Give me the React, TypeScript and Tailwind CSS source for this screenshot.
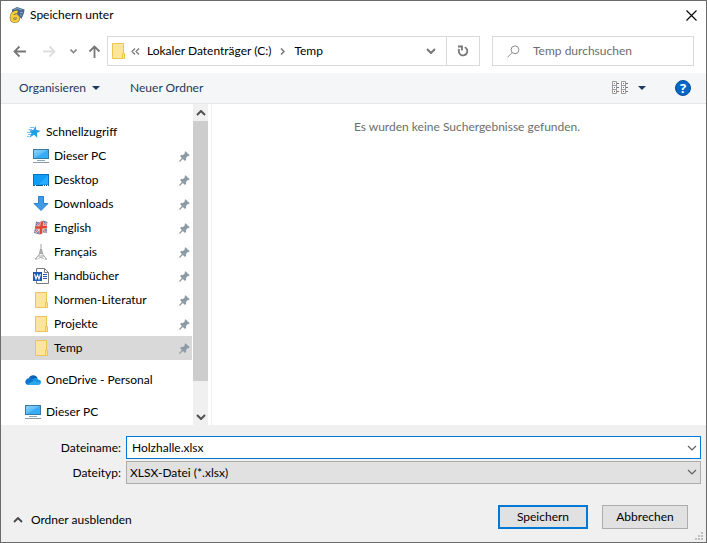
import { useState } from 'react';
import type { ReactNode } from 'react';

type Entry = {
  label: string;
  icon: ReactNode;
  selected?: boolean;
};

/* Icons */

function AppIcon() {
  return (
    <svg width="16" height="16" viewBox="0 0 16 16">
      <path d="M3 2.500 L8 0 L15.500 2.500 L15 6 L12.500 12 L8 7 L3 5 Z" fill="#47698f" />
      <path d="M5 2.500 L8.500 1.500 L13 3 M11 5.500 L14 5.500 M11 8 L13 8" stroke="#86a3c6" fill="none" />
      <path
        d="M8.500 5 C4.500 4.500 2.800 7 2.500 10.500 C2.500 13 4 14 5.800 14 C8 14 9.200 12.800 9.200 11.300 C9.200 9.700 8 9 6.500 9 C5 9 4 9.500 3 10.500"
        fill="none"
        stroke="#7d7040"
        strokeWidth="3.600"
      />
      <path
        d="M8.500 5 C4.500 4.500 2.800 7 2.500 10.500 C2.500 13 4 14 5.800 14 C8 14 9.200 12.800 9.200 11.300 C9.200 9.700 8 9 6.500 9 C5 9 4 9.500 3 10.500"
        fill="none"
        stroke="#f9cf36"
        strokeWidth="2.400"
      />
      <path d="M5.500 11 H6.500 V12.500 H5.500 Z" fill="#5c5230" />
    </svg>
  );
}

function FolderIcon() {
  return (
    <svg width="16" height="16" viewBox="0 0 16 16">
      <path d="M2.500 0.500 H13.500 V15.500 H2.500 Z" fill="#ffe59a" stroke="#eac54f" />
      <path d="M12.500 10.500 H14.500 V15.500 H12.500 Z" fill="#ffe79f" stroke="#eac54f" />
    </svg>
  );
}

function ComputerIcon() {
  return (
    <svg width="16" height="16" viewBox="0 0 16 16">
      <defs>
        <linearGradient id="screen" x1="0" y1="0" x2="1" y2="1">
          <stop offset="0" stopColor="#8fd4fb" />
          <stop offset="0.500" stopColor="#5cbdf8" />
          <stop offset="0.520" stopColor="#3aacf3" />
          <stop offset="1" stopColor="#29b0f8" />
        </linearGradient>
      </defs>
      <rect x="0.500" y="1.500" width="15" height="9" fill="url(#screen)" stroke="#39789f" />
      <rect x="4" y="12" width="8" height="1" fill="#8fa9bb" />
      <rect x="0" y="14" width="16" height="1" fill="#8a9ba8" />
    </svg>
  );
}

function DesktopIcon() {
  return (
    <svg width="16" height="16" viewBox="0 0 16 16">
      <rect x="0.500" y="2.500" width="15" height="11" fill="#0e9cf9" stroke="#0872bd" />
      <path d="M15 3 V12 H6 Z" fill="#29abff" />
      <path d="M1 13.500 H15" stroke="#07578f" />
      <path d="M2 13.500 H3 M10 13.500 H11 M12 13.500 H13 M14 13.500 H15" stroke="#fff" />
    </svg>
  );
}

function DownloadIcon() {
  return (
    <svg width="16" height="16" viewBox="0 0 16 16">
      <path d="M5.500 0.500 H10.500 V7.500 H15 L8 14.500 L1 7.500 H5.500 Z" fill="#3f9ae8" stroke="#2b80cc" />
    </svg>
  );
}

function StarIcon() {
  return (
    <svg width="16" height="16" viewBox="0 0 16 16">
      <path
        d="M10.500 2 L11.300 6 L15.700 6.700 L12 9 L12.300 13.700 L9 10.800 L4.500 13.700 L6.500 9.300 L4.500 6.500 L8.300 6 Z"
        fill="#1f9fe8"
      />
      <path d="M5 3.500 H9 M3.500 5.500 H7 M2 8.500 H6 M3 10.500 H6 M2 12.500 H4.500" stroke="#77c3ef" />
    </svg>
  );
}

function EnglishIcon() {
  return (
    <svg width="16" height="16" viewBox="0 0 16 16">
      <path d="M3 1.500 L7 2.500 L10 0.500 L14.500 2 L13.500 7 L14 13 L10 12.500 L7 14.500 L1 13 L2 8 Z" fill="#6179b0" />
      <path d="M4 3 L13 12.500 M13.500 3 L2.500 12.500" stroke="#e9d5dc" strokeWidth="1.800" />
      <path d="M9 1.500 L7.500 14 M2 7.500 L14 7" stroke="#f1c9c4" strokeWidth="4" />
      <path d="M9 1.500 L7.500 14 M2 7.500 L14 7" stroke="#df4632" strokeWidth="2.400" />
      <path d="M4 3 L6.500 5.500 M13.500 3 L11 5 M2.500 12.500 L5 10 M13 12.500 L10.500 10" stroke="#d8665e" />
    </svg>
  );
}

function TowerIcon() {
  return (
    <svg width="16" height="16" viewBox="0 0 16 16" fill="none" stroke="#a3a3a3">
      <path d="M8 0 V6" />
      <path d="M7.500 5 L6.500 10 L2.500 15 M8.500 5 L9.500 10 L13.500 15" />
      <path d="M6 9.500 H10 M5 12 H11 M7 6 L9 9 M9 6 L7 9" />
      <path d="M5.500 15 C6 13 10 13 10.500 15 M2 15 H4.500 M11.500 15 H14" />
    </svg>
  );
}

function WordIcon() {
  return (
    <svg width="16" height="16" viewBox="0 0 16 16">
      <path d="M3.500 0.500 H11.500 L15.500 4.500 V15.500 H3.500 Z" fill="#fff" stroke="#7a7a7a" />
      <path d="M11.500 0.500 V4.500 H15.500" fill="none" stroke="#7a7a7a" />
      <path d="M10 6.500 H14 M10 8.500 H14 M10 10.500 H14" stroke="#2b5fb4" />
      <rect x="0" y="4" width="9" height="9" fill="#2058b2" />
      <path d="M1.500 6 L3 11 L4.500 7 L6 11 L7.500 6" fill="none" stroke="#fff" strokeWidth="1.100" />
    </svg>
  );
}

function CloudIcon() {
  return (
    <svg width="16" height="16" viewBox="0 0 16 16">
      <path d="M4 6 C5 2.500 11 2 12.500 6 L11 9 L5 8 Z" fill="#0a5fb4" />
      <path d="M3.500 13 C-1 13 -0.500 7 3.500 6.300 C5 5.500 7 6 8 7 L11 10 L6 13 Z" fill="#0c75d0" />
      <path d="M7 8 C9 5.500 12 5.500 13 7.500 C16 7.500 16.500 10 15.500 11.500 L10 10 Z" fill="#1793e4" />
      <path d="M2 12.500 L9 8.800 L15.700 11.300 C15.300 12.500 14.500 13 13.500 13 H3.500 C3 13 2.500 12.800 2 12.500 Z" fill="#2aa8ee" />
    </svg>
  );
}

function PinIcon() {
  return (
    <svg width="11" height="11" viewBox="0 0 11 11" fill="#8c9ba5">
      <path d="M6.500 0.300 L10.700 4.300 L9.500 5.300 L8.800 5.100 L7 7 L7.200 8.800 L6 10 L3.900 8.100 L0.900 10.900 L0 10.200 L2.900 7 L1 5 L2.200 3.900 L4 4 L5.900 2.200 L5.600 1.200 Z" />
    </svg>
  );
}

function Chevron({ className = '', color = '#5f5f5f', width = 1 }: { className?: string; color?: string; width?: number }) {
  return (
    <svg className={className} width="10" height="6" viewBox="0 0 10 6" fill="none">
      <path d="M1 1 L5 5 L9 1" stroke={color} strokeWidth={width} />
    </svg>
  );
}

function Arrow({ className = '', color = '#777' }: { className?: string; color?: string }) {
  return (
    <svg className={className} width="13" height="13" viewBox="0 0 13 13" fill="none" stroke={color} strokeWidth="1.800">
      <path d="M1.500 6.500 H13 M6.500 1.500 L1.500 6.500 L6.500 11.500" />
    </svg>
  );
}

function ViewIcon() {
  return (
    <svg width="17" height="14" viewBox="0 0 17 14" fill="none">
      <path d="M0.500 0.500 H4.500 V12.500 H0.500 Z M9.500 0.500 H13.500 V12.500 H9.500 Z" fill="#fff" stroke="#999" />
      <path d="M0.500 4.500 H4.500 M0.500 8.500 H4.500 M9.500 4.500 H13.500 M9.500 8.500 H13.500" stroke="#999" />
      <path d="M5 2.500 H7 M5 6.500 H7 M5 10.500 H7 M14 2.500 H16 M14 6.500 H16 M14 10.500 H16" stroke="#777" />
      <path d="M2 2.500 H3 M11 2.500 H12" stroke="#777" />
      <path d="M2 6.500 H3 M11 6.500 H12" stroke="#5577cc" />
      <path d="M2 10.500 H3 M11 10.500 H12" stroke="#c33" />
    </svg>
  );
}

const quickAccess: Entry[] = [
  { label: 'Dieser PC', icon: <ComputerIcon /> },
  { label: 'Desktop', icon: <DesktopIcon /> },
  { label: 'Downloads', icon: <DownloadIcon /> },
  { label: 'English', icon: <EnglishIcon /> },
  { label: 'Français', icon: <TowerIcon /> },
  { label: 'Handbücher', icon: <WordIcon /> },
  { label: 'Normen-Literatur', icon: <FolderIcon /> },
  { label: 'Projekte', icon: <FolderIcon /> },
  { label: 'Temp', icon: <FolderIcon />, selected: true },
];

function TreeRoot({ label, icon }: Entry) {
  return (
    <button className="flex h-6 w-full items-center gap-[5px] pl-6 text-left">
      {icon}
      <span>{label}</span>
    </button>
  );
}

function Sidebar() {
  return (
    <nav className="flex w-[207px] shrink-0">
      <div className="min-w-0 flex-1 space-y-2 pt-4 pb-px">
        <div>
          <TreeRoot label="Schnellzugriff" icon={<StarIcon />} />
          <ul className="mr-px">
            {quickAccess.map((entry) => (
              <li key={entry.label}>
                <button
                  className={`flex h-6 w-full items-center gap-[5px] pr-[2px] pl-8 text-left ${entry.selected ? 'bg-[#d9d9d9]' : ''}`}
                >
                  {entry.icon}
                  <span className="flex-1">{entry.label}</span>
                  <PinIcon />
                </button>
              </li>
            ))}
          </ul>
        </div>
        <TreeRoot label="OneDrive - Personal" icon={<CloudIcon />} />
        <TreeRoot label="Dieser PC" icon={<ComputerIcon />} />
      </div>

      {/* Bildlaufleiste */}
      <div className="flex w-[15px] flex-col bg-[#f0f0f0]">
        <button aria-label="Nach oben" className="flex h-[17px] items-center justify-center">
          <Chevron className="rotate-180" color="#505050" width={2} />
        </button>
        <div className="h-[260px] bg-[#cdcdcd]" />
        <button aria-label="Nach unten" className="mt-auto flex h-[17px] items-center justify-center">
          <Chevron color="#505050" width={2} />
        </button>
      </div>
    </nav>
  );
}

export default function App() {
  const [fileName, setFileName] = useState('Holzhalle.xlsx');

  return (
    <div className="flex min-h-screen flex-col border border-[#6b6b6b] bg-white font-['Lato','Open_Sans',sans-serif] text-[12px] leading-4 text-black">
      {/* Titelleiste */}
      <header className="flex h-[35px] items-start pt-[6px] pr-[9px] pl-2">
        <AppIcon />
        <h1 className="ml-[5px] flex-1">Speichern unter</h1>
        <button aria-label="Schließen" className="pt-[3px]">
          <svg width="11" height="11" viewBox="0 0 11 11" stroke="#000" strokeWidth="1.100">
            <path d="M0.500 0.500 L10.500 10.500 M10.500 0.500 L0.500 10.500" />
          </svg>
        </button>
      </header>

      {/* Navigation */}
      <div className="flex h-[30px] items-center pr-3 pl-3">
        <div className="flex w-[94px] items-center">
          <button aria-label="Zurück"><Arrow /></button>
          <button aria-label="Vorwärts" className="ml-[17px]"><Arrow className="rotate-180" color="#ddd" /></button>
          <button aria-label="Zuletzt besucht" className="ml-[14px]">
            <svg width="7" height="5" viewBox="0 0 7 5" fill="none" stroke="#888" strokeWidth="1.600">
              <path d="M0.500 0.500 L3.500 3.500 L6.500 0.500" />
            </svg>
          </button>
          <button aria-label="Nach oben" className="ml-[11px]"><Arrow className="rotate-90" /></button>
        </div>
        <div className="flex h-[30px] flex-1 items-center border border-[#d9d9d9]">
          <span className="ml-[2px]"><FolderIcon /></span>
          <svg className="ml-[5px]" width="9" height="7" viewBox="0 0 9 7" fill="none" stroke="#777" strokeWidth="1.200">
            <path d="M4 0.500 L1 3.500 L4 6.500 M8 0.500 L5 3.500 L8 6.500" />
          </svg>
          <button className="ml-[7px]">Lokaler Datenträger (C:)</button>
          <svg className="ml-[9px]" width="5" height="7" viewBox="0 0 5 7" fill="none" stroke="#777" strokeWidth="1.500">
            <path d="M1 0.500 L4 3.500 L1 6.500" />
          </svg>
          <button className="ml-[9px]">Temp</button>
          <button aria-label="Verlauf" className="mr-[10px] ml-auto">
            <Chevron color="#777" width={2} />
          </button>
          <button aria-label="Aktualisieren" className="flex h-full w-[33px] items-center justify-center border-l border-[#d9d9d9]">
            <svg width="12" height="12" viewBox="0 0 12 12" fill="none" stroke="#777" strokeWidth="1.800">
              <path d="M7.800 2.200 A4.300 4.300 0 1 1 2.300 4" />
              <path d="M1 1.500 H5 V5.500" />
            </svg>
          </button>
        </div>
        <label className="ml-3 flex h-[30px] w-[202px] items-center border border-[#d9d9d9] pl-[14px]">
          <svg className="shrink-0" width="13" height="13" viewBox="0 0 13 13" fill="none" stroke="#8c8c8c">
            <circle cx="8" cy="4.800" r="3.900" />
            <path d="M5.200 7.600 L0.500 12.300" />
          </svg>
          <input
            type="search"
            aria-label="Temp durchsuchen"
            placeholder="Temp durchsuchen"
            className="ml-[13px] w-full min-w-0 outline-none placeholder:text-[#6d6d6d]"
          />
        </label>
      </div>

      {/* Werkzeugleiste */}
      <div className="mt-[7px] flex h-[31px] items-center border-b border-[#e6e7e8] bg-[#f5f6f7] pr-[15px] pl-[18px] text-[#1e395b]">
        <button className="flex items-center gap-[6px]">
          Organisieren
          <svg width="8" height="4" viewBox="0 0 8 4" fill="#1e395b"><path d="M0 0 H8 L4 4 Z" /></svg>
        </button>
        <button className="ml-[30px]">Neuer Ordner</button>
        <button aria-label="Ansicht ändern" className="ml-auto flex items-center gap-[9px]">
          <ViewIcon />
          <svg width="8" height="4" viewBox="0 0 8 4" fill="#1e395b"><path d="M0 0 H8 L4 4 Z" /></svg>
        </button>
        <button
          aria-label="Hilfe"
          className="ml-[29px] flex size-4 items-center justify-center rounded-full border border-[#0b4f93] bg-[#0067c9] font-['Open_Sans',sans-serif] text-[13px] font-bold text-white"
        >
          ?
        </button>
      </div>

      <div className="flex flex-1">
        <Sidebar />
        <main className="ml-[3px] flex-1 border-l border-[#f0f0f0] pt-[15px] pl-4 text-center text-[#6d6d6d]">
          <p>Es wurden keine Suchergebnisse gefunden.</p>
        </main>
      </div>

      <form className="relative bg-[#f0f0f0] pt-[11px] pr-[5px] pb-[13px]" onSubmit={(e) => e.preventDefault()}>
        <div className="grid grid-cols-[120px_1fr] items-center gap-x-[5px] gap-y-[2px]">
          <label htmlFor="filename" className="text-right">Dateiname:</label>
          <div className="flex h-[23px] items-center border border-[#0078d7] bg-white pr-[3px]">
            <input
              id="filename"
              className="min-w-0 flex-1 pl-[5px] outline-none"
              value={fileName}
              onChange={(e) => setFileName(e.target.value)}
            />
            <button type="button" aria-label="Vorherige Namen"><Chevron width={1.2} /></button>
          </div>
          <label htmlFor="filetype" className="text-right">Dateityp:</label>
          <div className="relative">
            <select id="filetype" className="block h-[23px] w-full appearance-none border border-[#adadad] bg-[#e1e1e1] pl-[3px]">
              <option>XLSX-Datei (*.xlsx)</option>
            </select>
            <Chevron className="pointer-events-none absolute top-2 right-1" width={1.2} />
          </div>
        </div>

        <div className="mt-[21px] flex items-start pr-[13px]">
          <button type="button" className="mt-[7px] ml-3 flex items-center gap-2">
            <Chevron className="rotate-180" color="#444" width={1.8} />
            Ordner ausblenden
          </button>
          <button type="submit" className="ml-auto h-6 w-[90px] border-2 border-[#0078d7] bg-[#e1e1e1]">
            Speichern
          </button>
          <button type="button" className="ml-[14px] h-6 w-[86px] border border-[#adadad] bg-[#e1e1e1]">
            Abbrechen
          </button>
        </div>

        <svg className="absolute right-[3px] bottom-[2px]" width="8" height="8" viewBox="0 0 8 8" fill="#bfbfbf">
          <path d="M6 0h2v2h-2z M3 3h2v2h-2z M6 3h2v2h-2z M0 6h2v2h-2z M3 6h2v2h-2z M6 6h2v2h-2z" />
        </svg>
      </form>
    </div>
  );
}
